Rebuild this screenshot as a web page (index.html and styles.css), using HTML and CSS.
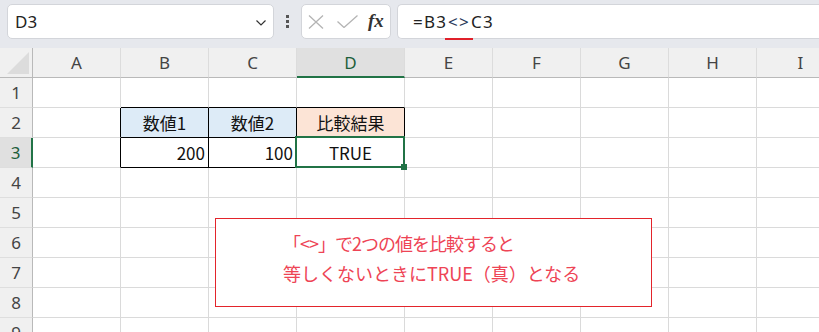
FILE: index.html
```html
<!DOCTYPE html>
<html lang="ja">
<head>
  <meta charset="UTF-8" />
  <title>比較演算子</title>
  <link rel="stylesheet" href="styles.css">
</head>
<body>
  <div class="app">
    <div class="toolbar">
      <div class="namebox">
        <span>D3</span>
        <svg class="chev" width="10" height="6" viewBox="0 0 10 6"><path d="M0.5 0.5 L5 5 L9.5 0.5" fill="none" stroke="#333" stroke-width="1.2"/></svg>
      </div>
      <div class="dots"><i></i><i></i><i></i></div>
      <div class="fxbox">
        <svg width="16" height="14" viewBox="0 0 16 14"><path d="M1 0.5 L15 13.5 M15 0.5 L1 13.5" stroke="#b4b4b4" stroke-width="1.3" fill="none"/></svg>
        <svg width="21" height="13" viewBox="0 0 21 13"><path d="M0.5 6.5 L7 12.5 L20.5 0.5" stroke="#b4b4b4" stroke-width="1.3" fill="none"/></svg>
        <span class="fx">fx</span>
      </div>
      <div class="formula">=B3<span class="op">&lt;&gt;</span>C3</div>
    </div>

    <div class="sheet">
      <div class="grid">
        <!-- 列見出し -->
        <div class="h corner"></div>
        <div class="h">A</div>
        <div class="h">B</div>
        <div class="h">C</div>
        <div class="h on">D</div>
        <div class="h">E</div>
        <div class="h">F</div>
        <div class="h">G</div>
        <div class="h">H</div>
        <div class="h">I</div>

        <div class="r">1</div>
        <div class="c"></div><div class="c bt"></div><div class="c bt"></div><div class="c bt"></div>
        <div class="c"></div><div class="c"></div><div class="c"></div><div class="c"></div><div class="c"></div>

        <div class="r">2</div>
        <div class="c bl"></div>
        <div class="c tb blue">数値1</div>
        <div class="c tb blue">数値2</div>
        <div class="c tb peach">比較結果</div>
        <div class="c"></div><div class="c"></div><div class="c"></div><div class="c"></div><div class="c"></div>

        <div class="r on">3</div>
        <div class="c bl"></div>
        <div class="c tb num">200</div>
        <div class="c tb num">100</div>
        <div class="c tb">TRUE</div>
        <div class="c"></div><div class="c"></div><div class="c"></div><div class="c"></div><div class="c"></div>

        <div class="r">4</div>
        <div class="c"></div><div class="c"></div><div class="c"></div><div class="c"></div>
        <div class="c"></div><div class="c"></div><div class="c"></div><div class="c"></div><div class="c"></div>

        <div class="r">5</div>
        <div class="c"></div><div class="c"></div><div class="c"></div><div class="c"></div>
        <div class="c"></div><div class="c"></div><div class="c"></div><div class="c"></div><div class="c"></div>

        <div class="r">6</div>
        <div class="c"></div><div class="c"></div><div class="c"></div><div class="c"></div>
        <div class="c"></div><div class="c"></div><div class="c"></div><div class="c"></div><div class="c"></div>

        <div class="r">7</div>
        <div class="c"></div><div class="c"></div><div class="c"></div><div class="c"></div>
        <div class="c"></div><div class="c"></div><div class="c"></div><div class="c"></div><div class="c"></div>

        <div class="r">8</div>
        <div class="c"></div><div class="c"></div><div class="c"></div><div class="c"></div>
        <div class="c"></div><div class="c"></div><div class="c"></div><div class="c"></div><div class="c"></div>

        <div class="r">9</div>
        <div class="c"></div><div class="c"></div><div class="c"></div><div class="c"></div>
        <div class="c"></div><div class="c"></div><div class="c"></div><div class="c"></div><div class="c"></div>
      </div>

      <!-- 選択セル D3 -->
      <div class="selection"><span class="handle"></span></div>

      <!-- 説明の図形 -->
      <div class="note">
        <p class="tight">「&lt;&gt;」で2つの値を比較すると</p>
        <p>等しくないときにTRUE（真）となる</p>
      </div>
    </div>
  </div>
</body>
</html>
```

FILE: styles.css
```css
body {
  margin: 0;
  background: #fff;
  font-family: "Noto Sans", "Noto Sans CJK JP", sans-serif;
  color: #222;
}

.app {
  width: 819px;
  height: 332px;
  overflow: hidden;
}

/* 数式バー */
.toolbar {
  height: 48px;
  background: #e6e8ed;
  display: flex;
  align-items: flex-start;
  padding-top: 4px;
  box-sizing: border-box;
}

.namebox {
  margin-left: 7px;
  width: 267px;
  height: 35px;
  box-sizing: border-box;
  background: #fff;
  border: 1px solid #d3d5da;
  border-radius: 5px;
  display: flex;
  align-items: center;
  justify-content: space-between;
  padding: 0 7px 0 7px;
  font-size: 17px;
  color: #222;
}

.chev { margin-top: 2px; }

.dots {
  width: 27px;
  height: 35px;
  display: flex;
  flex-direction: column;
  align-items: center;
  justify-content: center;
  gap: 2px;
}

.dots i {
  display: block;
  width: 3px;
  height: 3px;
  background: #555;
}

.fxbox {
  width: 90px;
  height: 35px;
  box-sizing: border-box;
  background: #fff;
  border: 1px solid #d3d5da;
  border-radius: 5px;
  display: flex;
  align-items: center;
  padding-left: 6px;
  gap: 13px;
}

.fx {
  font-family: "Liberation Serif", serif;
  font-style: italic;
  font-weight: bold;
  font-size: 19px;
  color: #333;
  margin-left: -3px;
  margin-top: -2px;
}

.formula {
  margin-left: 6px;
  flex: 1;
  height: 35px;
  box-sizing: border-box;
  background: #fff;
  border: 1px solid #d3d5da;
  border-right: none;
  border-radius: 5px 0 0 5px;
  padding-left: 15px;
  display: flex;
  align-items: center;
  font-size: 17px;
  letter-spacing: 1.2px;
  color: #222;
}

.op {
  position: relative;
  color: #2a3a5a;
  padding: 0 1px;
}

.op::after {
  content: "";
  position: absolute;
  left: -2px;
  right: -2px;
  bottom: -7px;
  height: 2.5px;
  background: #e0202a;
}

/* シート */
.sheet {
  position: relative;
  height: 284px;
  overflow: hidden;
}

.grid {
  display: grid;
  grid-template-columns: 33px 88px 88px 88px 108px 88px 88px 88px 88px 88px;
  grid-auto-rows: 30px;
  width: 845px;
}

.grid > div {
  box-sizing: border-box;
  display: flex;
  align-items: center;
  justify-content: center;
}

.h {
  background: #f0f0f0;
  border-right: 1px solid #dcdcdc;
  border-bottom: 1px solid #b9b9b9;
  font-size: 17px;
  color: #444;
}

.h.on {
  background: #e0e0e0;
  border-bottom: 2px solid #217346;
  color: #1d5e3a;
}

.corner {
  position: relative;
  border-right: 1px solid #b9b9b9;
}

.corner::after {
  content: "";
  position: absolute;
  right: 3px;
  bottom: 3px;
  border-style: solid;
  border-width: 0 0 22px 22px;
  border-color: transparent transparent #dcdcdc transparent;
}

.r {
  background: #f0f0f0;
  border-right: 1px solid #b9b9b9;
  border-bottom: 1px solid #dedede;
  font-size: 17px;
  color: #444;
}

.r.on {
  background: #e0e0e0;
  border-right: 2px solid #217346;
  color: #1d5e3a;
}

.c {
  border-right: 1px solid #dadada;
  border-bottom: 1px solid #dadada;
  font-family: "Noto Sans CJK JP", sans-serif;
  font-size: 17px;
  color: #111;
}

/* 表の罫線 */
.bt { border-bottom-color: #000; }
.bl { border-right-color: #000; }

.tb {
  border-right-color: #000;
  border-bottom-color: #000;
}

.blue { background: #ddebf7; }
.peach { background: #fce4d6; }

.grid > .num {
  justify-content: flex-end;
  padding-right: 3px;
}

.selection {
  position: absolute;
  left: 295px;
  top: 88px;
  width: 110px;
  height: 32px;
  box-sizing: border-box;
  border: 2px solid #217346;
}

.handle {
  position: absolute;
  right: -4px;
  bottom: -4px;
  width: 6px;
  height: 6px;
  background: #217346;
}

.note {
  position: absolute;
  left: 215px;
  top: 170px;
  width: 437px;
  height: 89px;
  box-sizing: border-box;
  background: #fff;
  border: 1px solid #e3242b;
  padding: 9px 0 0 67px;
  color: #ee4455;
  font-family: "Noto Sans CJK JP", sans-serif;
  font-size: 18px;
}

.note p {
  margin: 0;
  height: 30px;
  line-height: 30px;
  white-space: nowrap;
}

.note .tight { letter-spacing: -1px; }
```
